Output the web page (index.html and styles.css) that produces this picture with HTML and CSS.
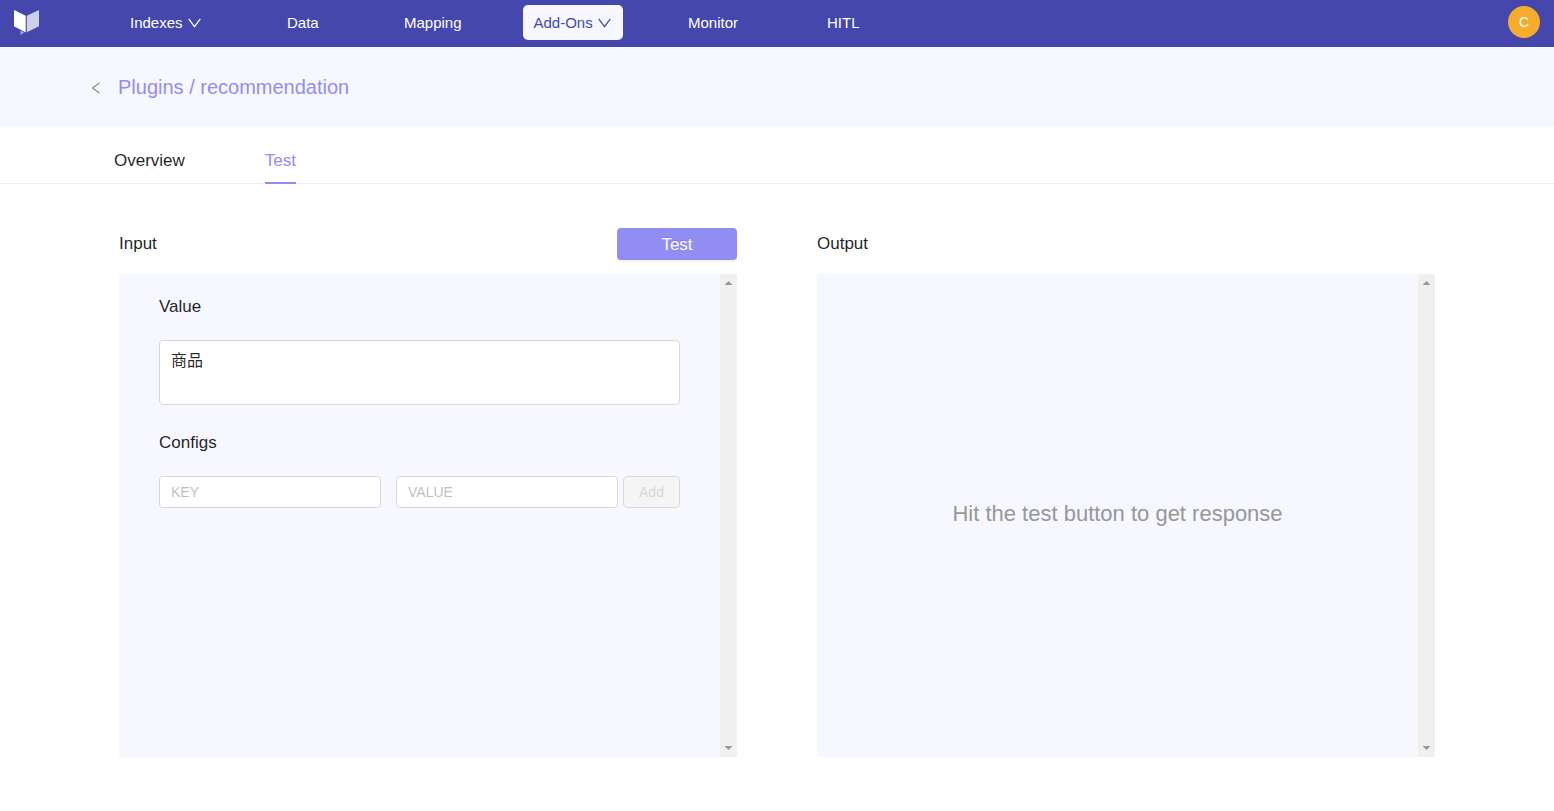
FILE: index.html
```html
<!DOCTYPE html>
<html lang="en">
<head>
<meta charset="utf-8">
<title>Plugins / recommendation</title>
<link rel="stylesheet" href="styles.css">
</head>
<body>
<header class="topbar">
  <svg class="logo" width="28" height="28" viewBox="0 0 28 28">
    <path d="M1 1 L12.7 6.8 V23.5 L1 17.3 Z" fill="#fff"/>
    <path d="M13.8 6.8 L26 1 V17.3 L13.8 23.3 Z" fill="#cfd0ec"/>
    <path d="M7.5 21.8 L11.2 23.6 L7.5 26 Z" fill="#a9abdc"/>
  </svg>
  <nav class="nav">
    <a class="nav-item">Indexes<svg class="caret" width="13" height="10" viewBox="0 0 13 10"><path d="M.7 .8 L6.5 8.7 L12.3 .8"/></svg></a>
    <a class="nav-item">Data</a>
    <a class="nav-item">Mapping</a>
    <a class="nav-item nav-active">Add-Ons<svg class="caret" width="13" height="10" viewBox="0 0 13 10"><path d="M.7 .8 L6.5 8.7 L12.3 .8"/></svg></a>
    <a class="nav-item">Monitor</a>
    <a class="nav-item">HITL</a>
  </nav>
  <div class="avatar">C</div>
</header>
<div class="page-head">
  <svg class="back" width="10" height="12" viewBox="0 0 10 12"><path d="M8.5 .9 L1.4 6 L8.5 11.1"/></svg>
  <h1 class="title">Plugins / recommendation</h1>
</div>
<div class="tabs">
  <a class="tab">Overview</a>
  <a class="tab tab-active">Test</a>
</div>
<main class="columns">
  <section class="column">
    <div class="column-head"><span>Input</span><button class="run">Test</button></div>
    <div class="panel">
      <form class="form">
        <label class="label" for="value">Value</label>
        <textarea class="field area" id="value">商品</textarea>
        <div class="label label-configs">Configs</div>
        <div class="config-row">
          <input class="field key" placeholder="KEY">
          <input class="field" placeholder="VALUE">
          <button class="add" disabled>Add</button>
        </div>
      </form>
      <div class="track"><i class="arrow up"></i><i class="arrow down"></i></div>
    </div>
  </section>
  <section class="column">
    <div class="column-head"><span>Output</span></div>
    <div class="panel">
      <div class="empty">Hit the test button to get response</div>
      <div class="track"><i class="arrow up"></i><i class="arrow down"></i></div>
    </div>
  </section>
</main>
</body>
</html>
```
FILE: styles.css
```css
* { box-sizing: border-box; }
body {
  margin: 0;
  height: 811px;
  overflow: hidden;
  background: #fff;
  color: rgba(0, 0, 0, .88);
  font: 17px/24px "Liberation Sans", Arial, "Noto Sans CJK SC", sans-serif;
}
.topbar {
  display: flex;
  height: 47px;
  padding-left: 13px;
  padding-right: 14px;
  background: #4547ad;
}
.logo { margin-top: 9px; }
.nav {
  display: grid;
  grid-template-columns: 157px 117px 129px 155px 139px 60px;
  justify-items: start;
  margin-left: 79px;
  padding-top: 5px;
}
.nav-item {
  display: flex;
  align-items: center;
  height: 35px;
  padding: 0 10px;
  border-radius: 5px;
  color: #fff;
  font-size: 15px;
}
.nav-active { width: 100px; padding-left: 10.5px; background: #f7f7ff; color: #4547ad; }
.caret, .back { fill: none; stroke: currentColor; stroke-width: 1.2; }
.caret { flex: none; margin-left: 5px; margin-top: 1px; }
.avatar {
  width: 32px;
  height: 32px;
  margin: 6px 0 0 auto;
  border-radius: 50%;
  background: #f6ad2d;
  color: #fff;
  font-size: 14px;
  line-height: 32px;
  text-align: center;
}
.page-head {
  display: flex;
  align-items: center;
  height: 80px;
  padding-left: 91px;
  background: #f7f7ff;
}
.back { margin-top: 2px; color: #8c8c8c; }
.title { margin: 0 0 0 17px; color: #918df3; font-size: 20px; font-weight: 400; }
.tabs {
  display: flex;
  gap: 80px;
  height: 57px;
  padding-left: 114px;
  border-bottom: 1px solid #f0f0f0;
}
.tab { height: 57px; padding-top: 22px; }
.tab-active { border-bottom: 2px solid #918df3; color: #918df3; }
.columns { display: flex; gap: 80px; padding: 44px 119px 0; }
.column { width: 618px; }
.column-head {
  display: flex;
  justify-content: space-between;
  height: 46px;
  line-height: 31px;
}
.run {
  width: 120px;
  height: 32px;
  padding: 1px 0 0;
  border: 0;
  border-radius: 4px;
  background: #918df3;
  box-shadow: 0 2px 0 rgba(0, 0, 0, .045);
  color: #fff;
  font: 17px/31px "Liberation Sans", Arial, sans-serif;
  text-shadow: 0 -1px 0 rgba(0, 0, 0, .12);
}
.panel { display: flex; height: 483px; background: #f7f7ff; }
.form { flex: 1; padding: 21px 40px 0; }
.label { display: block; height: 24px; }
.field {
  display: block;
  width: 222px;
  height: 32px;
  margin: 0;
  padding: 4px 11px;
  border: 1px solid #d9d9d9;
  border-radius: 4px;
  background: #fff;
  color: rgba(0, 0, 0, .85);
  font: 14px/22px "Liberation Sans", Arial, sans-serif;
}
.field::placeholder { color: #bfbfbf; }
.area {
  width: 521px;
  height: 65px;
  margin-top: 21px;
  padding: 8px 11px;
  overflow: hidden;
  font: 16px/24px "Liberation Sans", "Noto Sans CJK SC", sans-serif;
  resize: none;
}
.label-configs { margin-top: 26px; }
.config-row { display: flex; margin-top: 21px; }
.key { margin-right: 15px; }
.add {
  width: 57px;
  height: 32px;
  margin-left: 5px;
  padding: 0;
  border: 1px solid #d9d9d9;
  border-radius: 4px;
  background: #f5f5f5;
  color: #d5d5d5;
  font: 14px/22px "Liberation Sans", Arial, sans-serif;
}
.track {
  display: flex;
  flex-direction: column;
  align-items: center;
  justify-content: space-between;
  width: 17px;
  padding: 7px 0;
  background: #f0f0f0;
}
.arrow { width: 8px; height: 4px; background: #999; }
.up { clip-path: polygon(50% 0, 100% 100%, 0 100%); }
.down { clip-path: polygon(0 0, 100% 0, 50% 100%); }
.empty {
  display: flex;
  flex: 1;
  align-items: center;
  justify-content: center;
  padding-bottom: 4px;
  color: #979797;
  font-size: 22px;
}
```
